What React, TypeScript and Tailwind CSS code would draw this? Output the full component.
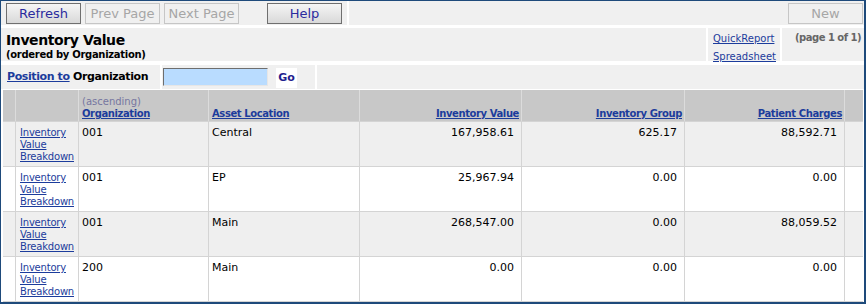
import React from 'react';
import clsx from 'clsx';

const rows = [
  { org: '001', loc: 'Central', value: '167,958.61', group: '625.17', charges: '88,592.71' },
  { org: '001', loc: 'EP', value: '25,967.94', group: '0.00', charges: '0.00' },
  { org: '001', loc: 'Main', value: '268,547.00', group: '0.00', charges: '88,059.52' },
  { org: '200', loc: 'Main', value: '0.00', group: '0.00', charges: '0.00' },
];

const cols = 'grid grid-cols-[12px_62px_129px_150px_161px_162px_159px_18px] gap-x-px';
const link = 'text-[#1c3c9c] underline';
const headLink = 'text-[#1c3c9c] underline font-bold tracking-[-0.4px]';

function ToolButton({ label, disabled, className }: { label: string; disabled?: boolean; className?: string }) {
  return (
    <button
      className={clsx(
        'h-[21px] w-[75px] border text-[13px] leading-none',
        disabled
          ? 'border-[#c6c6c6] bg-[#f0f0f0] text-[#a6a6a6]'
          : 'border-[#6f6f6f] bg-gradient-to-b from-[#f5f5f5] to-[#d9d9d9] text-[#2b2b9e]',
        className
      )}
    >
      {label}
    </button>
  );
}

export default function App() {
  return (
    <div className="w-[866px] h-[304px] overflow-hidden border-t border-l border-r-2 border-b-2 border-[#1e4a7b] bg-white font-['DejaVu_Sans',Verdana,sans-serif] text-black">
      {/* Toolbar */}
      <div className="flex h-[24px] gap-[2px]">
        <div className="flex w-[346px] items-start gap-[4px] bg-[#f0f0f0] pl-[5px] pt-[2px]">
          <ToolButton label="Refresh" />
          <ToolButton label="Prev Page" disabled />
          <ToolButton label="Next Page" disabled />
          <ToolButton label="Help" className="ml-[24px]" />
        </div>
        <div className="flex flex-1 items-start justify-end bg-[#f0f0f0] pr-[1px] pt-[2px]">
          <ToolButton label="New" disabled />
        </div>
      </div>

      {/* Title */}
      <div className="mt-[3px] flex h-[33px] gap-[2px]">
        <div className="w-[705px] bg-[#f0f0f0] pl-[5px] pt-[4px]">
          <div className="text-[14px] font-bold leading-[16px] tracking-[-0.4px]">Inventory Value</div>
          <div className="text-[10px] font-bold leading-[13px] tracking-[-0.3px]">(ordered by Organization)</div>
        </div>
        <div className="w-[72px] bg-[#f0f0f0] pl-[5px] pt-[2px] text-[10px] leading-[18px]">
          <div className={link}>QuickReport</div>
          <div className={link}>Spreadsheet</div>
        </div>
        <div className="flex-1 overflow-hidden whitespace-nowrap bg-[#f0f0f0] pl-[13px] pt-[1px] text-[10px] font-bold leading-[18px] tracking-[-0.5px] text-[#666]">
          (page 1 of 1)
        </div>
      </div>

      {/* Position to */}
      <div className="mt-[4px] flex h-[24px]">
        <div className="flex w-[159px] items-center bg-[#f0f0f0] pl-[6px] text-[11px] font-bold tracking-[-0.4px]">
          <span className={link}>Position to</span>
          <span>&nbsp;Organization</span>
        </div>
        <div className="ml-[2px] flex w-[153px] items-start bg-[#f0f0f0] pt-[3px]">
          <input className="ml-[1px] h-[18px] w-[105px] border border-t-[#6e6e6e] border-l-[#6e6e6e] border-b-[#e6e6e6] border-r-[#e6e6e6] bg-[#b9dcff] outline-none" />
          <button className="ml-[8px] h-[20px] w-[21px] bg-white text-[11px] font-bold text-[#1f1f8f]">Go</button>
        </div>
        <div className="ml-[2px] flex-1 bg-[#f0f0f0]" />
      </div>

      {/* Table */}
      <div className="ml-[2px] mt-[1px] w-[860px] bg-[#d4d4d4]">
        <div className={clsx(cols, 'h-[31px] bg-[#dcdcdc]')}>
          <div className="bg-[#c8c8c8]" />
          <div className="bg-[#c8c8c8]" />
          <div className="flex flex-col justify-end bg-[#c8c8c8] pb-[1px] pl-[3px] text-[10px] leading-[12px]">
            <span className="text-[#7676a0]">(ascending)</span>
            <span className={headLink}>Organization</span>
          </div>
          <div className="flex flex-col justify-end bg-[#c8c8c8] pb-[1px] pl-[3px] text-[10px] leading-[12px]">
            <span className={headLink}>Asset Location</span>
          </div>
          {['Inventory Value', 'Inventory Group', 'Patient Charges'].map((h) => (
            <div key={h} className="flex flex-col items-end justify-end bg-[#c8c8c8] pb-[1px] pr-[2px] text-[10px] leading-[12px]">
              <span className={headLink}>{h}</span>
            </div>
          ))}
          <div className="bg-[#c8c8c8]" />
        </div>

        {rows.map((r, i) => {
          const bg = i % 2 === 0 ? 'bg-[#efefef]' : 'bg-white';
          return (
            <div key={i} className={clsx(cols, 'mt-px h-[44px]')}>
              <div className={bg} />
              <div className={clsx(bg, 'pl-[4px] pt-[5px] text-[10px] leading-[12px] tracking-[-0.2px]')}>
                <div className={link}>Inventory</div>
                <div className={link}>Value</div>
                <div className={link}>Breakdown</div>
              </div>
              <div className={clsx(bg, 'pl-[3px] pt-[4px] text-[11px] leading-[13px]')}>{r.org}</div>
              <div className={clsx(bg, 'pl-[3px] pt-[4px] text-[11px] leading-[13px]')}>{r.loc}</div>
              <div className={clsx(bg, 'pr-[7px] pt-[4px] text-right text-[11px] leading-[13px]')}>{r.value}</div>
              <div className={clsx(bg, 'pr-[7px] pt-[4px] text-right text-[11px] leading-[13px]')}>{r.group}</div>
              <div className={clsx(bg, 'pr-[7px] pt-[4px] text-right text-[11px] leading-[13px]')}>{r.charges}</div>
              <div className={bg} />
            </div>
          );
        })}
        <div className="h-px" />
      </div>
    </div>
  );
}
